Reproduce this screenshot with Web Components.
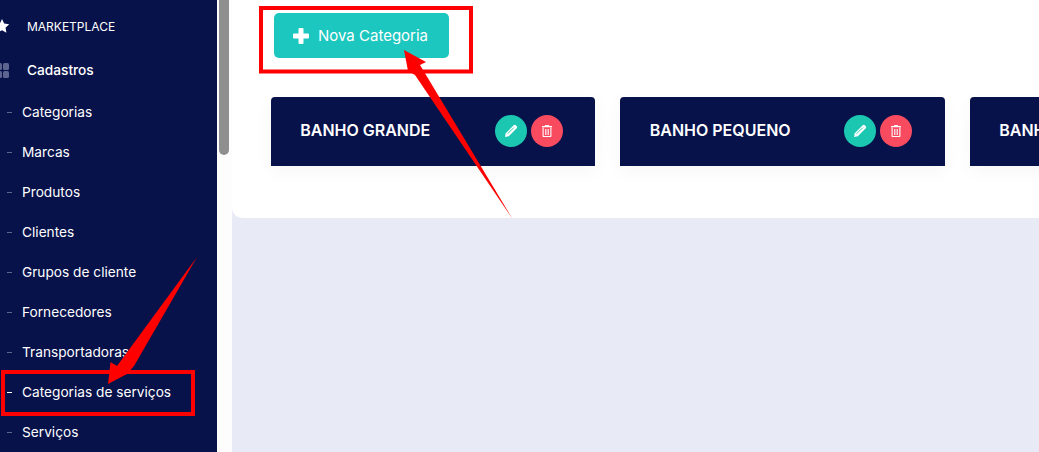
<!DOCTYPE html>
<html><head><meta charset="utf-8"><style>
html,body{margin:0;height:452px;overflow:hidden;background:#e8eaf5;font-family:"Inter","Liberation Sans",sans-serif}
</style></head><body>
<app-shell>
  <side-nav slot="nav">
    <nav-head label="MARKETPLACE" size="12" icon="star"></nav-head>
    <nav-head label="Cadastros" size="13.700" icon="grid"></nav-head>
    <nav-item>Categorias</nav-item>
    <nav-item>Marcas</nav-item>
    <nav-item>Produtos</nav-item>
    <nav-item>Clientes</nav-item>
    <nav-item>Grupos de cliente</nav-item>
    <nav-item>Fornecedores</nav-item>
    <nav-item>Transportadoras</nav-item>
    <nav-item active>Categorias de serviços</nav-item>
    <nav-item>Serviços</nav-item>
  </side-nav>
  <main-panel slot="main">
    <add-button>Nova Categoria</add-button>
    <category-list>
      <category-card>BANHO GRANDE</category-card>
      <category-card>BANHO PEQUENO</category-card>
      <category-card>BANHO</category-card>
    </category-list>
  </main-panel>
</app-shell>
<script>
function def(name, html){
  customElements.define(name, class extends HTMLElement{
    connectedCallback(){
      if(this.shadowRoot) return;
      const r=this.attachShadow({mode:'open'});
      r.innerHTML=typeof html==='function'?html(this):html;
    }
  });
}
const ICONS={
 star:'<svg width="16" height="16" viewBox="0 0 24 24" style="margin-left:-6px;margin-top:-1px"><path fill="#fff" d="M12 1.500l3.300 6.900 7.500 1-5.500 5.200 1.400 7.500L12 18.400l-6.700 3.700 1.400-7.500L1.200 9.400l7.500-1z"/></svg>',
 grid:'<svg width="14" height="17" viewBox="0 0 14 17" style="margin-left:-5px"><g fill="#5c648f"><rect x="1" y="1" width="6" height="7" rx="1.500"/><rect x="8" y="1" width="6" height="7" rx="1.500"/><rect x="1" y="9" width="6" height="7" rx="1.500"/><rect x="8" y="9" width="6" height="7" rx="1.500"/></g></svg>'
};
def('app-shell',`<style>
:host{display:block;position:relative;width:1039px;height:452px;overflow:hidden}
.row{display:flex;height:452px}
.bar{width:15px;flex:none;background:#fdfdfd;padding:0 3px 0 2px;box-sizing:border-box}
.thumb{height:155px;background:#8f8f8f;border-radius:0 0 5px 5px}
.over{position:absolute;left:0;top:0;pointer-events:none}
</style><div class="row"><slot name="nav"></slot><div class="bar"><div class="thumb"></div></div><slot name="main"></slot></div>
<svg class="over" width="1039" height="452">
<g fill="none" stroke="#fe0000" stroke-width="4">
<rect x="261" y="8" width="210" height="63.500"/>
<rect x="3" y="372" width="190" height="42"/>
</g>
<g fill="#fe0000">
<path d="M404 50 L426 62 L420 65 L512.500 219 L415 75 L408 71 Z"/>
<path d="M197 257 L134 366 L127 374 L108 384 L110.500 362 L117 366 Z"/>
</g></svg>`);
def('side-nav',`<style>
:host{display:block;width:217px;flex:none;height:452px;background:#07114a;overflow:hidden;color:#fff;padding-top:5px;box-sizing:border-box}
</style><slot></slot>`);
def('nav-head',h=>`<style>
:host{display:flex;align-items:center;height:43.500px;gap:17px;font-size:${h.getAttribute('size')}px;font-weight:${h.getAttribute('label')==='MARKETPLACE'?400:500};color:#fff}
.i{width:10px;display:flex;overflow:visible}
</style><span class="i">${ICONS[h.getAttribute('icon')]}</span><span>${h.getAttribute('label')}</span>`);
def('nav-item',h=>`<style>
:host{display:flex;align-items:center;height:40px;padding-left:7px;gap:10px;font-size:13.700px;color:#fff}
.d{width:5px;height:1px;background:${h.hasAttribute('active')?'#fff':'#5c648f'};flex:none}
</style><span class="d"></span><slot></slot>`);
def('main-panel',`<style>
:host{display:block;flex:1;min-width:0;align-self:flex-start;background:#fff;height:218px;border-radius:0 0 0 10px;padding:13px 0 0 42px;box-sizing:border-box;overflow:hidden}
</style><slot></slot>`);
def('add-button',`<style>
:host{display:flex;align-items:center;gap:9px;width:175px;height:45px;box-sizing:border-box;padding-left:19px;background:#1cc7bf;border-radius:5px;color:#fff;font-size:15px;font-weight:400}
svg{flex:none}
</style><svg width="16" height="16" viewBox="0 0 16 16"><path fill="#fff" d="M5.500 1a1 1 0 0 1 1-1h3a1 1 0 0 1 1 1v4.500H15a1 1 0 0 1 1 1v3a1 1 0 0 1-1 1h-4.500V15a1 1 0 0 1-1 1h-3a1 1 0 0 1-1-1v-4.500H1a1 1 0 0 1-1-1v-3a1 1 0 0 1 1-1h4.500z"/></svg><slot></slot>`);
def('category-list',`<style>
:host{display:flex;gap:25px;margin:39px 0 0 -3.300px;width:1100px}
</style><slot></slot>`);
def('category-card',`<style>
:host{display:flex;align-items:center;width:324.500px;height:69px;flex:none;box-sizing:border-box;padding:0 32.500px 2px 29.500px;background:#07114a;border-radius:4px 4px 0 0;color:#fff;font-size:16px;font-weight:600;box-shadow:0 5px 20px rgba(7,17,74,.04)}
.t{flex:1;white-space:nowrap;overflow:hidden;padding-bottom:2px}
.b{width:32px;height:32px;border-radius:50%;display:flex;align-items:center;justify-content:center;flex:none}
.e{background:#1cc7b1}.x{background:#f84b5f;margin-left:4px}
</style><span class="t"><slot></slot></span>
<span class="b e"><svg width="14" height="14" viewBox="0 0 14 14"><path d="M1 13l.8-3.800L9.700 1.300a1.500 1.500 0 0 1 2.100 0l.9.9a1.500 1.500 0 0 1 0 2.100L4.800 12.200z" fill="#fff"/><path d="M3.600 9.800l6.200-6.200" stroke="#1cc7b1" stroke-width=".9" fill="none"/></svg></span>
<span class="b x"><svg width="10" height="12" viewBox="0 0 10 12"><path fill="#fff" d="M3.200 0h3.600l.5 1H10v1.200H0V1h2.700z"/><path fill="none" stroke="#fff" stroke-width="1.100" d="M1.100 2.500V11a.5.5 0 0 0 .5.500h6.800a.5.5 0 0 0 .5-.5V2.500"/><path stroke="#ffd0dc" stroke-width="1" d="M3.500 4v6M5 4v6M6.500 4v6"/></svg></span>`);
</script></body></html>
